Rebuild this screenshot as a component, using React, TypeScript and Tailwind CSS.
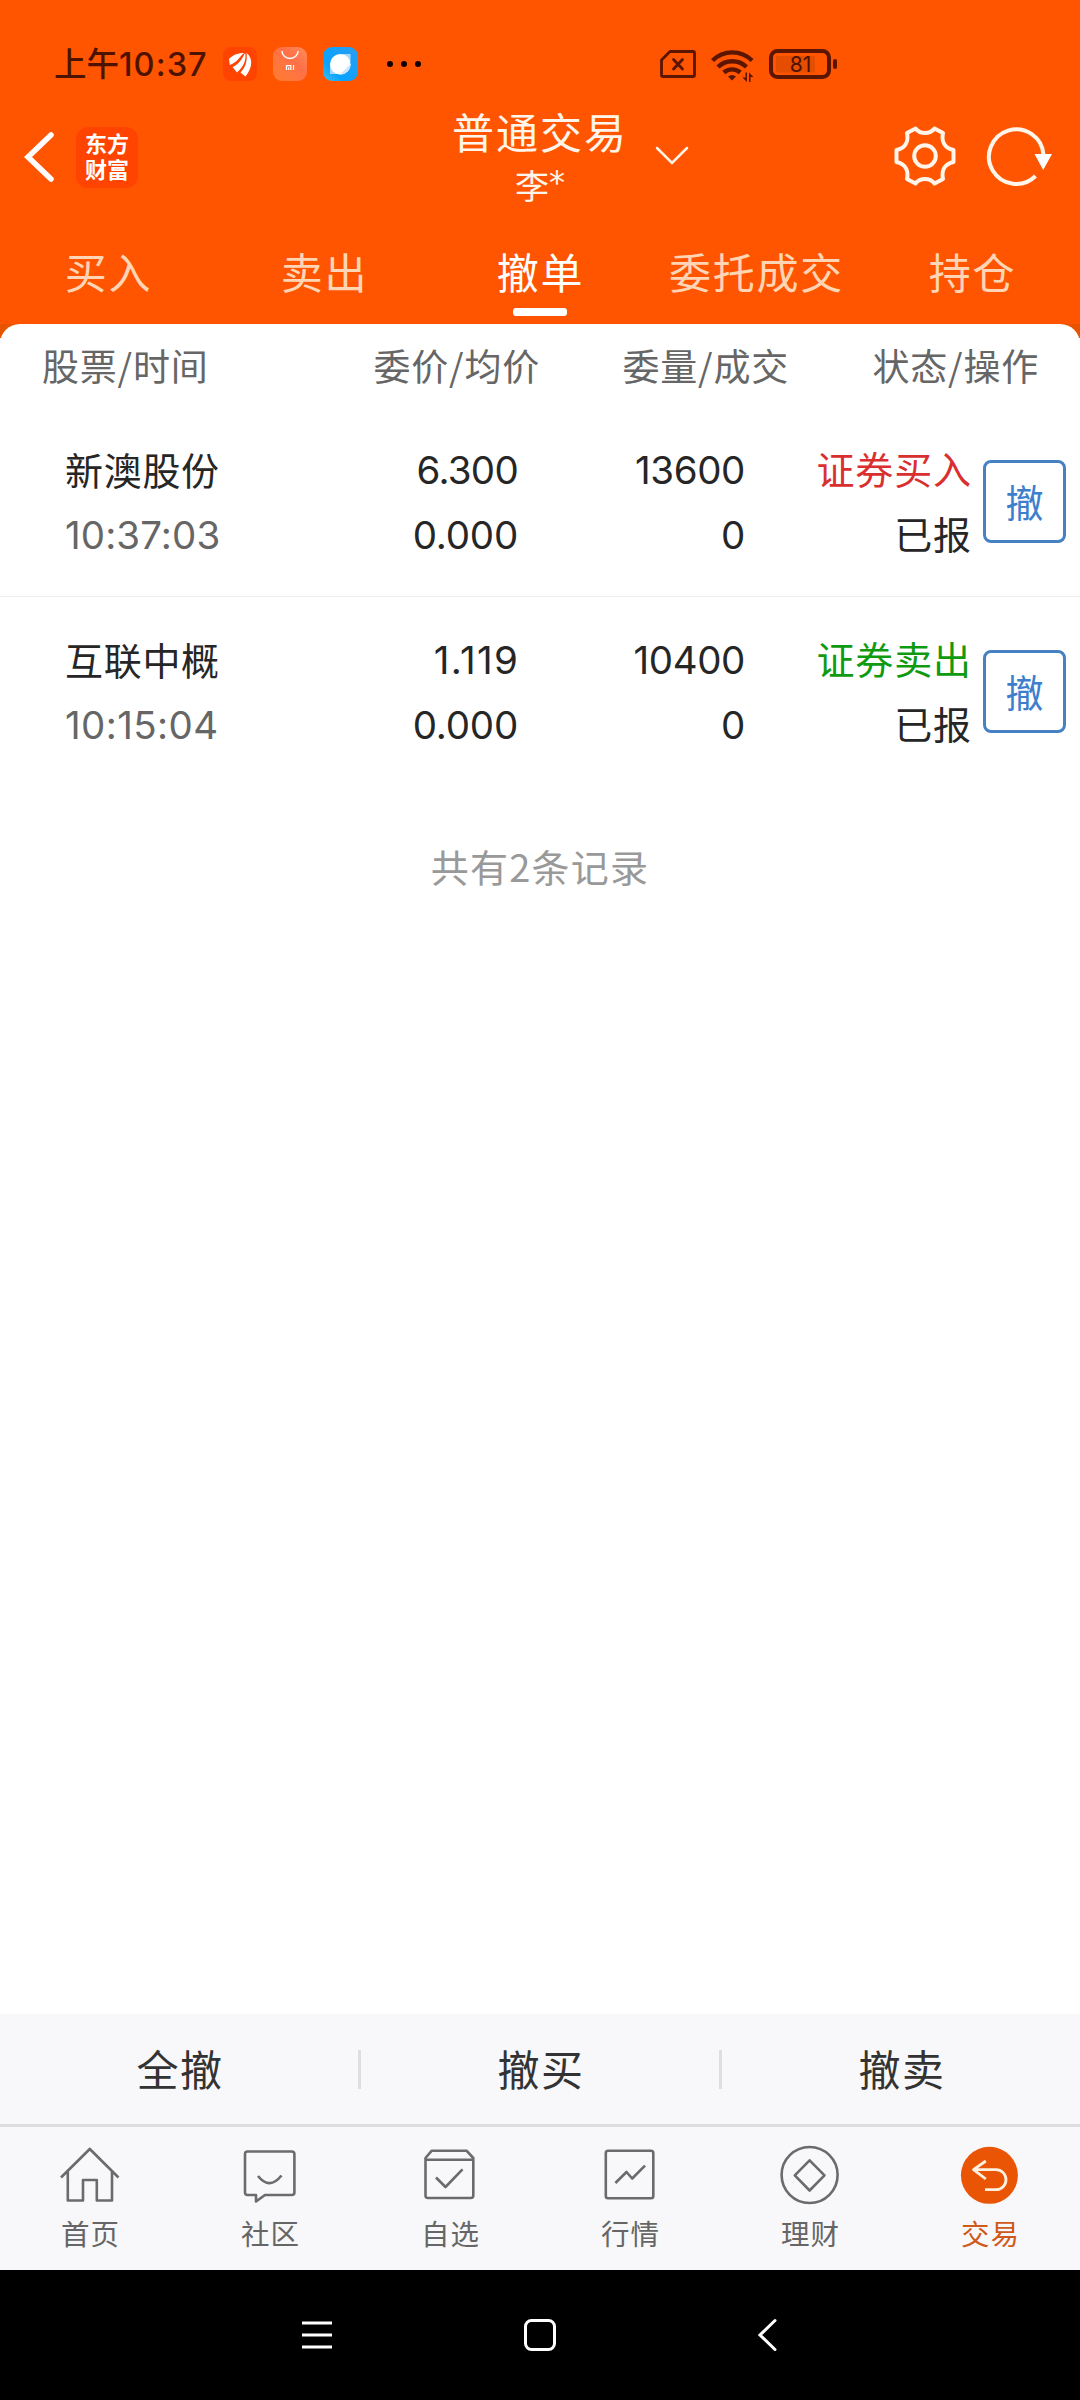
import React from "react";

type Order = {
  name: string;
  time: string;
  timeClass: string;
  price: string;
  priceClass: string;
  avg: string;
  qty: string;
  filled: string;
  side: string;
  sideClass: string;
};

const orders: Order[] = [
  { name: "新澳股份", time: "10:37:03", timeClass: "tracking-[0.100px]", price: "6.300", priceClass: "tracking-[-0.700px]", avg: "0.000", qty: "13600", filled: "0", side: "证券买入", sideClass: "text-[#d9302f]" },
  { name: "互联中概", time: "10:15:04", timeClass: "tracking-[0.400px]", price: "1.119", priceClass: "tracking-[1.400px] -mr-[1.400px]", avg: "0.000", qty: "10400", filled: "0", side: "证券卖出", sideClass: "text-[#109a10]" },
];

const tabs = ["买入", "卖出", "撤单", "委托成交", "持仓"];

function StatusBar() {
  return (
    <div className="flex h-[128px] items-center pl-[54px] text-[#4d1300]">
      <span className="mt-[1px] w-[169px] whitespace-nowrap font-['Inter','Noto_Sans_CJK_SC',sans-serif] text-[32.500px] leading-[48px] font-medium">
        上午<span className="tracking-[1.100px]">10:37</span>
      </span>
      <svg className="h-[34px] w-[34px]" viewBox="0 0 34 34">
        <rect width="34" height="34" rx="8" fill="#ff4300" />
        <g fill="#fff">
          <path d="M6 12C10 7.500 16 6 21 6C17 9 15 15 6.800 18Z" />
          <path d="M9.500 20C16 17.500 19 12 22 6C24 12 20.500 20 14 25.500Z" />
          <path d="M17.500 25.500C23 20 24.500 13 23.500 6C30 11 30 20 22.500 29.500Z" />
        </g>
      </svg>
      <svg className="ml-4 h-[34px] w-[34px]" viewBox="0 0 34 34">
        <defs>
          <linearGradient id="store" x1="0" y1="1" x2="1" y2="0">
            <stop offset="0" stopColor="#ff7d2d" />
            <stop offset=".6" stopColor="#ff7048" />
            <stop offset="1" stopColor="#ff8c58" />
          </linearGradient>
        </defs>
        <rect width="34" height="34" rx="9" fill="url(#store)" />
        <path d="M9 4a8 7.500 0 0 0 16 0" fill="none" stroke="#fff" strokeWidth="1.500" />
        <path d="M13.500 23v-4.300h4.300V23M15.700 20.500V23M20.500 18v5" fill="none" stroke="#fff" strokeWidth="1.200" />
      </svg>
      <svg className="ml-4 h-[34px] w-[35px]" viewBox="0 0 35 34">
        <defs>
          <linearGradient id="browser" x1="0" y1="1" x2="1" y2="0">
            <stop offset="0" stopColor="#3cc0f0" />
            <stop offset=".3" stopColor="#08a2ff" />
            <stop offset="1" stopColor="#2a9ef0" />
          </linearGradient>
        </defs>
        <rect width="35" height="34" rx="9" fill="url(#browser)" />
        <path d="M7 27V19L20 7h7.500v7.500L15 27z" fill="#a5d9fb" />
        <circle cx="17.300" cy="17.300" r="10.300" fill="#fff" />
        <path d="M17 27.600A10.300 10.300 0 0 0 27.600 17z" fill="#cfe5f8" />
      </svg>
      <div className="ml-[29px] flex gap-2">
        <i className="size-[6px] rounded-full bg-[#100000]" />
        <i className="size-[6px] rounded-full bg-[#100000]" />
        <i className="size-[6px] rounded-full bg-[#100000]" />
      </div>
      <svg className="ml-[239px] h-[28px] w-[36px]" viewBox="0 0 36 28" fill="none" stroke="#5c1500" strokeWidth="2.800" strokeLinejoin="round" strokeLinecap="round">
        <path d="M10 1.500H33Q34.500 1.500 34.500 3V25Q34.500 26.500 33 26.500H3Q1.500 26.500 1.500 25V10Z" />
        <path d="M13.500 9.500l9 9.500M22.500 9.500l-9 9.500" />
      </svg>
      <svg className="mt-[3px] ml-[15px] h-[34px] w-[43px]" viewBox="0 0 43 34" fill="none" stroke="#5c1500" strokeWidth="4.400">
        <path d="M1.500 11.500a28 28 0 0 1 39.500 0" />
        <path d="M7 18a20.500 20.500 0 0 1 28.500 0" />
        <path d="M12.800 23.500a12.500 12.500 0 0 1 16.500 0" />
        <path d="M17 27.500q4-3 8 0l-4 4z" fill="#5c1500" stroke="none" />
        <path d="M36 23.500V33L31.500 28.500H34.500V23.500ZM38 33V23.500L42.500 28H39.500V33Z" fill="#5c1500" stroke="none" />
      </svg>
      <svg className="ml-[15px] h-[30px] w-[70px]" viewBox="0 0 70 30" fill="none">
        <rect x="7" y="7" width="39" height="16.500" rx="2" fill="#e54d00" />
        <rect x="2" y="2" width="58" height="26" rx="6.500" stroke="#5c1500" strokeWidth="4" />
        <rect x="64" y="10" width="4" height="10" rx="2" fill="#5c1500" />
        <text x="31.500" y="23" textAnchor="middle" fontFamily="Inter, sans-serif" fontSize="21" fill="#4d1300">81</text>
      </svg>
    </div>
  );
}

function TitleBar() {
  return (
    <div className="flex h-[96px] items-start text-[#fff5ea]">
      <svg className="mt-[3px] ml-[24px] h-[52px] w-[32px]" viewBox="0 0 32 52" fill="none" stroke="#fff" strokeWidth="5.500" strokeLinecap="round">
        <path d="M27 4L4 26L27 48" />
      </svg>
      <div className="-mt-[1px] ml-[20px] flex h-[61px] w-[62px] items-center justify-center rounded-[12px] bg-[#ff4300]">
        <p className="-mt-[5px] w-[44px] text-[22px] leading-[26.500px] font-bold text-white">东方财富</p>
      </div>
      <div className="-mt-[24px] ml-[302px] flex w-[200px] flex-col items-center">
        <span className="text-[42px] leading-[54px] tracking-[2px]">普通交易</span>
        <span className="mt-[2px] flex text-[34px] leading-[50px]">
          李<span className="-mt-[3px] font-['DejaVu_Sans',sans-serif] text-[32px]">*</span>
        </span>
      </div>
      <svg className="mt-[16px] ml-[14px] h-[24px] w-[36px]" viewBox="0 0 36 24" fill="none" stroke="#fff5ea" strokeWidth="2.500" strokeLinecap="round">
        <path d="M3 4l15 15L33 4" />
      </svg>
      <svg className="-mt-[4px] ml-[203px] h-[64px] w-[64px]" viewBox="-32 -32 64 64" fill="none" stroke="#fff5ea" strokeWidth="4" strokeLinejoin="round">
        <path d="M-9.500-27.500C-5-21.500 5-21.500 9.500-27.500L18-23C16-14 20-8 28.500-6V6C20 8 16 14 18 23L9.500 27.500C5 21.500-5 21.500-9.500 27.500L-18 23C-16 14-20 8-28.500 6V-6C-20-8-16-14-18-23Z" />
        <circle r="10.800" />
      </svg>
      <svg className="-mt-[3px] ml-[28px] h-[64px] w-[68px]" viewBox="0 0 68 64" fill="none" stroke="#fff5ea" strokeWidth="4">
        <path d="M50.500 51A27.300 27.300 0 1 1 58.500 30" />
        <path d="M49.500 29H67L58.200 45Z" fill="#fff" stroke="none" />
      </svg>
    </div>
  );
}

function Tabs() {
  return (
    <div className="grid h-[100px] grid-cols-5 text-[42px] tracking-[1.800px]">
      {tabs.map((t) => (
        <div key={t} className={t === "撤单" ? "flex flex-col items-center text-white" : "flex flex-col items-center text-[#ffd5b5]"}>
          <span className="mt-[14px] ml-[1px] leading-[66px] whitespace-nowrap">{t}</span>
          {t === "撤单" && <i className="mt-[4px] h-[8px] w-[54px] rounded-[3px] bg-white" />}
        </div>
      ))}
    </div>
  );
}

function OrderRow({ o, last }: { o: Order; last: boolean }) {
  const num = "font-['Inter','Noto_Sans_CJK_SC',sans-serif] text-[38.500px]";
  return (
    <div className={last ? "flex h-[189px] items-center text-[38px] leading-[65px] text-[#262626]" : "flex h-[190px] items-center border-b border-[#ececec] text-[38px] leading-[65px] text-[#262626]"}>
      <div className="flex w-[265px] flex-col pl-[65px]">
        <span className="tracking-[0.700px]">{o.name}</span>
        <span className={"mt-[2px] text-[#666] " + num + " " + o.timeClass}>{o.time}</span>
      </div>
      <div className={"flex w-[253px] flex-col items-end pt-[3px] " + num}>
        <span className={o.priceClass}>{o.price}</span>
        <span className="tracking-[-0.200px]">{o.avg}</span>
      </div>
      <div className={"flex w-[227px] flex-col items-end pt-[3px] tracking-[-0.400px] " + num}>
        <span>{o.qty}</span>
        <span>{o.filled}</span>
      </div>
      <div className="flex w-[227px] flex-col items-end pb-[3px] tracking-[0.900px]">
        <span className={o.sideClass}>{o.side}</span>
        <span>已报</span>
      </div>
      <div className="ml-[11px] flex h-[83px] w-[83px] items-center justify-center rounded-[8px] border-3 border-[#4681c4] text-[38px] text-[#3d7fcc]">
        <span className="-mt-[3px]">撤</span>
      </div>
    </div>
  );
}

function NavIcon({ kind }: { kind: string }) {
  const paths: Record<string, React.ReactNode> = {
    首页: <path d="M1 32.500L29.800 4L58.500 32.500M7.800 26V55.500H23V35H36.800V55.500H52V26" />,
    社区: <path d="M7.500 6.500H51.700Q54.400 6.500 54.400 9V47.500Q54.400 50 51.700 50H25L16 56.500V50H7.500Q5 50 5 47.500V9Q5 6.500 7.500 6.500ZM18 31Q29.500 45.500 41.500 30.500" />,
    自选: <path d="M11.800 5.700H46.500L53.300 13V50.500Q53.300 53 50.800 53H8Q5.500 53 5.500 50.500V13ZM5.500 14.700H53.300M16 32.500L25.500 42L42.500 24.300" />,
    行情: <path d="M8 5.700H51Q53.300 5.700 53.300 8V51Q53.300 53.300 51 53.300H8Q5.800 53.300 5.800 51V8Q5.800 5.700 8 5.700ZM15.400 38L26.500 27L32.200 33.500L45 20.700" />,
    理财: (
      <>
        <circle cx="29.600" cy="30" r="28" />
        <path d="M29.600 15.300L44.500 30.300L29.600 45.500L14.800 30.300Z" />
      </>
    ),
    交易: (
      <>
        <circle cx="29.400" cy="30.300" r="28.500" fill="#e95504" stroke="none" />
        <path d="M25.800 16L13.500 24.700L25.800 34M13.500 24.700H36A10 10 0 0 1 36 44.700H25" stroke="#fff0e0" strokeWidth="2.800" />
      </>
    ),
  };
  return (
    <svg className="h-[60px] w-[60px]" viewBox="0 0 60 60" fill="none" stroke="#6b6b6b" strokeWidth="2.600" strokeLinejoin="round">
      {paths[kind]}
    </svg>
  );
}

export default function App() {
  return (
    <div className="flex h-[2400px] w-[1080px] flex-col overflow-hidden bg-white font-['Noto_Sans_CJK_SC',sans-serif]">
      <header className="h-[324px] shrink-0 bg-[#ff5500]">
        <StatusBar />
        <TitleBar />
        <Tabs />
      </header>
      <main className="flex-1 bg-[linear-gradient(#e85300_14px,#fff_14px)]">
        <div className="h-full rounded-t-[20px] bg-white">
          <div className="flex h-[83px] pt-[6px] text-[37px] leading-[70px] tracking-[0.800px] text-[#666]">
            <span className="w-[331px] pl-[42px]">股票/时间</span>
            <span className="w-[209px] text-right">委价/均价</span>
            <span className="w-[249px] text-right">委量/成交</span>
            <span className="w-[250px] text-right">状态/操作</span>
          </div>
          {orders.map((o, i) => (
            <OrderRow key={o.name} o={o} last={i === orders.length - 1} />
          ))}
          <div className="mt-[52px] text-center text-[38px] leading-[56px] tracking-[1.200px] text-[#999]">共有2条记录</div>
        </div>
      </main>
      <div className="flex h-[110px] shrink-0 items-center bg-[#f8f8fa] text-[42px] tracking-[1.500px] text-[#333]">
        <span className="-mt-[4px] flex-1 pl-[2px] text-center">全撤</span>
        <i className="h-[39px] w-[3px] bg-[#dedee1]" />
        <span className="-mt-[4px] flex-1 pl-[2px] text-center">撤买</span>
        <i className="h-[39px] w-[3px] bg-[#dedee1]" />
        <span className="-mt-[4px] flex-1 pl-[2px] text-center">撤卖</span>
      </div>
      <nav className="grid h-[146px] shrink-0 grid-cols-6 border-t-3 border-[#dedee1] bg-[#f8f8fa] text-[28.500px] text-[#666]">
        {["首页", "社区", "自选", "行情", "理财", "交易"].map((n) => (
          <div key={n} className={n === "交易" ? "flex flex-col items-center pt-[18px] text-[#cf5a1c]" : "flex flex-col items-center pt-[18px]"}>
            <NavIcon kind={n} />
            <span className="mt-[7px] ml-px leading-[42px] tracking-[1px]">{n}</span>
          </div>
        ))}
      </nav>
      <div className="flex h-[130px] shrink-0 items-center bg-black">
        <svg className="ml-[300px] h-[36px] w-[34px]" viewBox="0 0 34 36" stroke="#fff" strokeWidth="3">
          <path d="M2 6H32M2 18H32M2 30H32" />
        </svg>
        <svg className="ml-[188px] h-[36px] w-[36px]" viewBox="0 0 36 36" fill="none" stroke="#fff" strokeWidth="3">
          <rect x="3.500" y="3.500" width="29" height="29" rx="6" />
        </svg>
        <svg className="ml-[198px] h-[36px] w-[24px]" viewBox="0 0 24 36" fill="none" stroke="#fff" strokeWidth="3" strokeLinecap="round">
          <path d="M19 3.500L4 18L19 32.500" />
        </svg>
      </div>
    </div>
  );
}
